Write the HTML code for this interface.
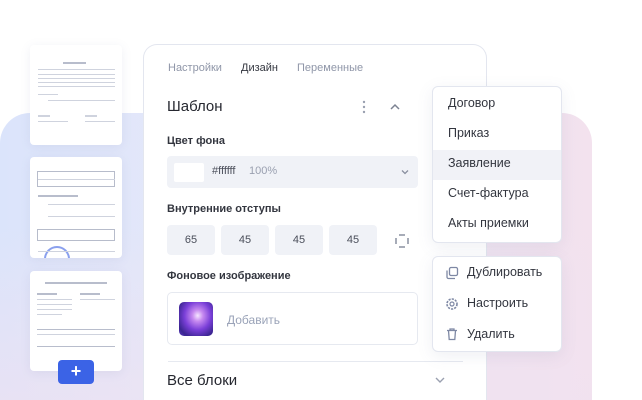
<!DOCTYPE html>
<html style="width:642px;height:400px;overflow:hidden"><head><meta charset="utf-8"><style>
*{margin:0;padding:0;box-sizing:border-box}
body{width:642px;height:400px;overflow:hidden;background:#fff;font-family:"Liberation Sans",sans-serif;position:relative;color:#2a2d36}
.a{position:absolute}
.clip{position:absolute;left:0;top:0;width:642px;height:400px;overflow:hidden}
.bg{left:0;top:113px;width:592px;height:287px;border-radius:30px 30px 0 0;background:linear-gradient(90deg,#dbe4fb 0%,#e8e9f8 45%,#f3e2ee 100%)}
.bg2{left:0;top:113px;width:592px;height:287px;border-radius:30px 30px 0 0;background:linear-gradient(180deg,rgba(255,255,255,0) 40%,rgba(240,225,240,.6) 100%)}
.th{background:#fff;border-radius:4px;box-shadow:0 2px 10px rgba(120,130,170,.12);width:92px;left:30px;overflow:hidden}
.ln{position:absolute;height:1px;background:#cfd3de}
.card{left:143px;top:44px;width:344px;height:356px;border:1px solid #e3e6ef;border-bottom:none;border-radius:14px 14px 0 0;background:#fff}
.t{font-size:11px;white-space:nowrap}
.fld{background:#f0f2f7;border-radius:4px}
.num{top:225px;width:48px;height:30px;text-align:center;line-height:30px;font-size:11px;color:#4a4e5a}
.dd{left:432px;width:130px;background:#fff;border:1px solid #e3e6ef;border-radius:6px;box-shadow:0 4px 16px rgba(100,110,150,.1)}
.it{position:absolute;left:15px;font-size:12.5px;color:#33363f}
</style></head><body><div class="clip">
<div class="a bg"></div><div class="a bg2"></div>

<div class="a th" style="top:45px;height:100px">
<div class="ln" style="left:33px;top:17px;width:23px;height:2px;background:#b8bdcc"></div>
<div class="ln" style="left:8px;top:24px;width:77px"></div>
<div class="ln" style="left:8px;top:29px;width:77px"></div>
<div class="ln" style="left:8px;top:33px;width:77px"></div>
<div class="ln" style="left:8px;top:37px;width:77px"></div>
<div class="ln" style="left:8px;top:41px;width:77px"></div>
<div class="ln" style="left:8px;top:49px;width:20px"></div>
<div class="ln" style="left:18px;top:55px;width:67px"></div>
<div class="ln" style="left:8px;top:70px;width:12px;height:2px"></div>
<div class="ln" style="left:55px;top:70px;width:12px;height:2px"></div>
<div class="ln" style="left:8px;top:76px;width:30px"></div>
<div class="ln" style="left:55px;top:76px;width:30px"></div>
</div>
<div class="a th" style="top:157px;height:101px">
<div class="a" style="left:7px;top:14px;width:78px;height:16px;border:1px solid #b7bccb"></div>
<div class="ln" style="left:8px;top:22px;width:77px"></div>
<div class="ln" style="left:8px;top:38px;width:40px;height:2px;background:#b8bdcc"></div>
<div class="ln" style="left:18px;top:47px;width:67px"></div>
<div class="ln" style="left:18px;top:59px;width:67px"></div>
<div class="a" style="left:7px;top:72px;width:78px;height:12px;border:1px solid #b7bccb"></div>
<div class="a" style="left:14px;top:89px;width:26px;height:26px;border-radius:50%;border:2px solid #8aa0ee"></div>
<div class="ln" style="left:8px;top:94px;width:77px"></div>
</div>
<div class="a th" style="top:271px;height:100px">
<div class="ln" style="left:15px;top:11px;width:62px;height:2px;background:#b8bdcc"></div>
<div class="ln" style="left:7px;top:22px;width:20px;height:2px;background:#b8bdcc"></div>
<div class="ln" style="left:50px;top:22px;width:20px;height:2px;background:#b8bdcc"></div>
<div class="ln" style="left:7px;top:28px;width:35px"></div><div class="ln" style="left:50px;top:28px;width:35px"></div>
<div class="ln" style="left:7px;top:33px;width:35px"></div><div class="ln" style="left:7px;top:38px;width:35px"></div>
<div class="ln" style="left:7px;top:43px;width:25px"></div>
<div class="ln" style="left:7px;top:58px;width:78px;background:#b8bdcc"></div>
<div class="ln" style="left:7px;top:63px;width:78px"></div>
<div class="ln" style="left:7px;top:75px;width:78px;background:#b8bdcc"></div>
</div>
<div class="a" style="left:58px;top:360px;width:36px;height:24px;background:#3b63e6;border-radius:4px;color:#fff;font-size:18px;line-height:23px;text-align:center;font-weight:bold">+</div>

<div class="a card"></div>
<div class="a t" style="left:168px;top:62px;color:#8f96a8">Настройки</div>
<div class="a t" style="left:241px;top:62px;color:#33363f">Дизайн</div>
<div class="a t" style="left:297px;top:62px;color:#8f96a8">Переменные</div>
<div class="a" style="left:167px;top:98px;font-size:15px;color:#262830">Шаблон</div>
<svg class="a" style="left:358px;top:99px" width="12" height="16"><circle cx="6" cy="3" r="1.2" fill="#9aa0b0"/><circle cx="6" cy="8" r="1.2" fill="#9aa0b0"/><circle cx="6" cy="13" r="1.2" fill="#9aa0b0"/></svg>
<svg class="a" style="left:389px;top:102px" width="12" height="10"><path d="M2 7L6 3L10 7" stroke="#7c8292" stroke-width="1.5" fill="none"/></svg>
<div class="a t" style="left:167px;top:135px;font-weight:bold;color:#33363f;font-size:11px">Цвет фона</div>
<div class="a fld" style="left:167px;top:156px;width:251px;height:32px"></div>
<div class="a" style="left:174px;top:163px;width:30px;height:19px;background:#fff;border-radius:2px"></div>
<div class="a t" style="left:212px;top:165px;color:#4a4e5a">#ffffff</div>
<div class="a t" style="left:249px;top:165px;color:#9aa0b0">100%</div>
<svg class="a" style="left:400px;top:168px" width="10" height="8"><path d="M2 2.5L5 5.5L8 2.5" stroke="#8a90a0" stroke-width="1.3" fill="none"/></svg>
<div class="a t" style="left:167px;top:203px;font-weight:bold;color:#33363f">Внутренние отступы</div>
<div class="a fld num" style="left:167px">65</div>
<div class="a fld num" style="left:221px">45</div>
<div class="a fld num" style="left:275px">45</div>
<div class="a fld num" style="left:329px">45</div>
<svg class="a" style="left:394px;top:233px" width="16" height="16"><path d="M5 2H11M5 14H11M2 5V11M14 5V11" stroke="#8a90a0" stroke-width="1.5" fill="none"/></svg>
<div class="a t" style="left:167px;top:270px;font-weight:bold;color:#33363f">Фоновое изображение</div>
<div class="a" style="left:167px;top:292px;width:251px;height:53px;border:1px solid #e6e9f0;border-radius:5px"></div>
<div class="a" style="left:179px;top:302px;width:34px;height:34px;border-radius:5px;background:radial-gradient(ellipse at 55% 40%,#f5e6ff 0%,#c78af0 20%,#7a3fd8 50%,#3a2590 80%,#5a3ac0 100%)"></div>
<div class="a" style="left:227px;top:313px;font-size:12px;color:#9aa3b8">Добавить</div>
<div class="a" style="left:168px;top:361px;width:295px;height:1px;background:#e6e9f0"></div>
<div class="a" style="left:167px;top:372px;font-size:15px;color:#262830">Все блоки</div>
<svg class="a" style="left:434px;top:376px" width="12" height="8"><path d="M2 2L6 6L10 2" stroke="#9aa0b0" stroke-width="1.4" fill="none"/></svg>

<div class="a dd" style="top:86px;height:157px">
<div class="a" style="left:0;top:63px;width:128px;height:30px;background:#f1f2f7"></div>
<div class="it" style="top:9px">Договор</div>
<div class="it" style="top:39px">Приказ</div>
<div class="it" style="top:69px">Заявление</div>
<div class="it" style="top:99px">Счет-фактура</div>
<div class="it" style="top:129px">Акты приемки</div>
</div>
<div class="a dd" style="top:256px;height:96px">
<svg class="a" style="left:12px;top:9px" width="14" height="14"><rect x="4.5" y="1.5" width="8" height="8" rx="1.5" stroke="#7e88a4" stroke-width="1.3" fill="none"/><path d="M2 4.5V11A1.5 1.5 0 0 0 3.5 12.5H10" stroke="#7e88a4" stroke-width="1.3" fill="none"/></svg>
<div class="it" style="left:34px;top:8px">Дублировать</div>
<svg class="a" style="left:12px;top:40px" width="14" height="14"><circle cx="7" cy="7" r="5" stroke="#7e88a4" stroke-width="1.6" stroke-dasharray="2.2 1.1" fill="none"/><circle cx="7" cy="7" r="2" stroke="#7e88a4" stroke-width="1.2" fill="none"/></svg>
<div class="it" style="left:34px;top:39px">Настроить</div>
<svg class="a" style="left:12px;top:70px" width="14" height="14"><path d="M2 3.5H12M5 3.5V2H9V3.5M3.5 3.5L4.2 12.5H9.8L10.5 3.5" stroke="#7e88a4" stroke-width="1.3" fill="none"/></svg>
<div class="it" style="left:34px;top:70px">Удалить</div>
</div>
</div></body></html>
